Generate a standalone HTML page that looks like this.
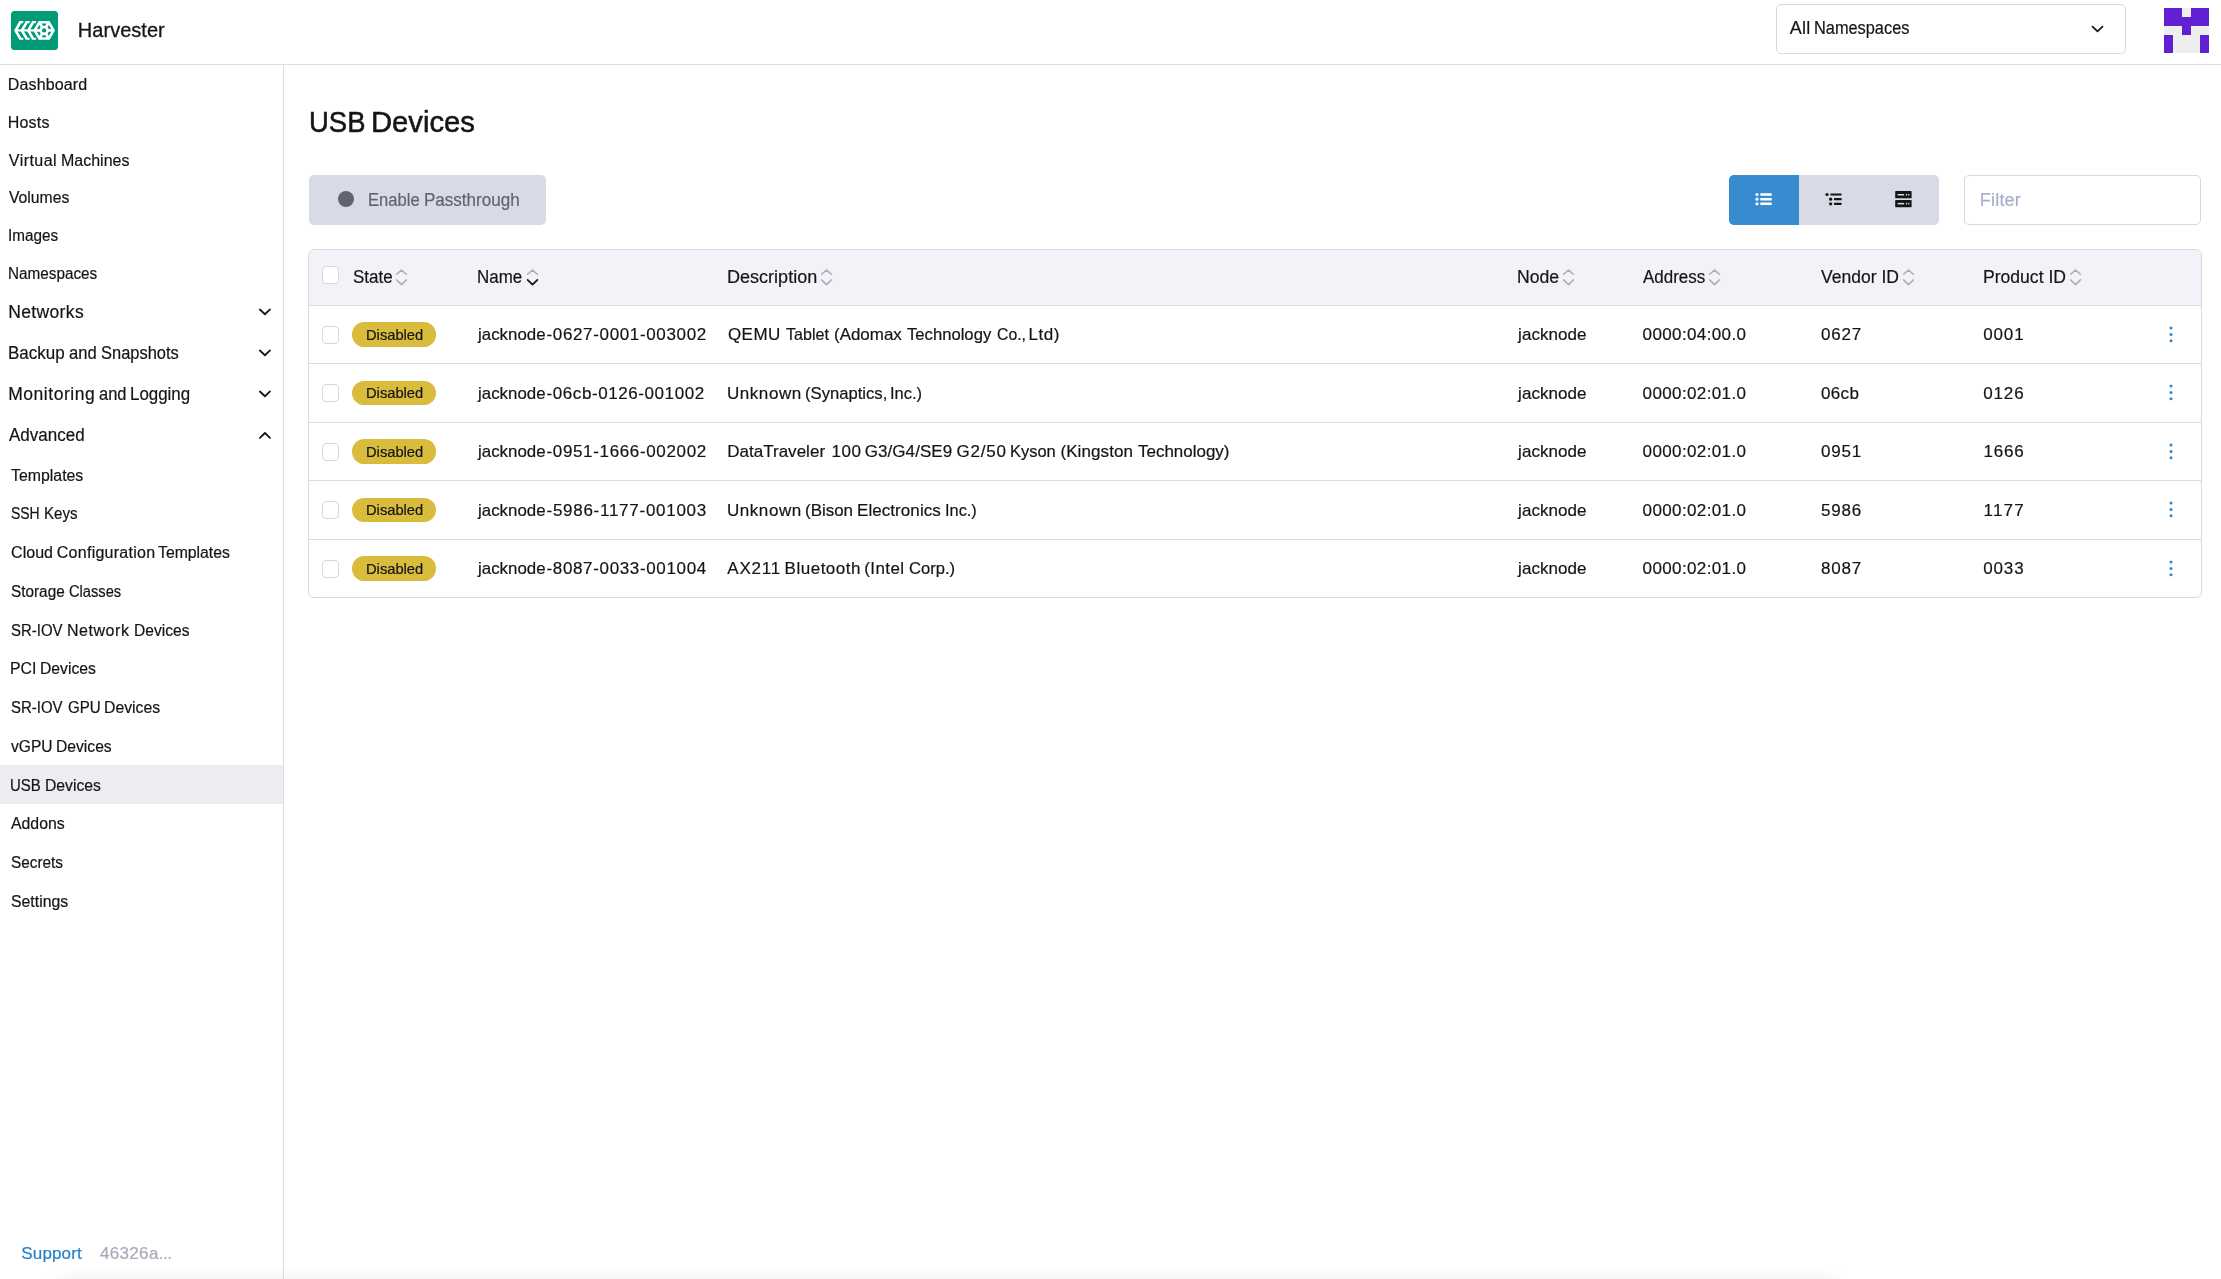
<!DOCTYPE html>
<html lang="en">
<head>
<meta charset="utf-8">
<title>Harvester - USB Devices</title>
<style>
*{box-sizing:border-box;margin:0;padding:0}
html,body{width:2221px;height:1279px;overflow:hidden;background:#fff}
body{position:relative;font-family:"Liberation Sans",sans-serif;color:#141419}
.a{position:absolute}
.t{position:absolute;white-space:nowrap;line-height:1;display:block;transform-origin:0 0;-webkit-text-stroke:0.2px currentColor}
.hdr-line{left:0;top:64px;width:2221px;height:1px;background:#dcdee7}
.side-line{left:283px;top:65px;width:1px;height:1214px;background:#dcdee7}
.active{left:0;top:765px;width:283px;height:38.7px;background:#ecedf3}
.logo{left:11px;top:11px;width:47px;height:39px}
.ns{left:1776px;top:4px;width:350px;height:50px;border:1px solid #d6d9e4;border-radius:5px;background:#fff}
.btn{left:309px;top:175px;width:237px;height:50px;border-radius:5px;background:#d8dae5}
.dot{left:338px;top:191.2px;width:16px;height:16px;border-radius:50%;background:#636370}
.views{left:1729px;top:175px;width:210px;height:50px;border-radius:5px;background:#d8dae5;overflow:hidden}
.views .on{position:absolute;left:0;top:0;width:70px;height:50px;background:#378bce}
.filter{left:1964px;top:175px;width:237px;height:50px;border:1px solid #d6d9e4;border-radius:5px;background:#fff}
.table{left:308px;top:249px;width:1894px;height:349px;border:1px solid #d6d9e4;border-radius:6px;background:#fff;overflow:hidden}
.thead{position:absolute;left:0;top:0;width:100%;height:56px;background:#f2f3f8}
.rl{position:absolute;left:0;width:100%;height:1px;background:#d9dce6}
.cb{position:absolute;width:16.9px;height:18px;border:1px solid #d5d8e3;border-radius:4px;background:#fff}
.badge{position:absolute;left:352px;width:84px;height:24.6px;border-radius:12.3px;background:#d9bc3c}
.fade{left:60px;top:1282px;width:1775px;height:30px;box-shadow:0 0 20px 0 rgba(0,0,0,0.1)}
svg{position:absolute;overflow:visible}
</style>
</head>
<body>
<div class="a hdr-line"></div>
<div class="a side-line"></div>
<div class="a active"></div>

<!-- logo -->
<svg class="logo" viewBox="11 11 47 39" width="47" height="39">
  <rect x="11" y="11" width="47" height="39" rx="3.5" fill="#009b77"/>
  <g fill="#fff"><polygon points="14.07,30.43 19.46,21.10 23.46,21.10 23.06,23.15 21.28,23.15 17.07,30.43 21.28,37.71 23.06,37.71 23.46,39.76 19.46,39.76"/><polygon points="20.42,30.43 25.81,21.10 29.81,21.10 29.41,23.15 27.63,23.15 23.42,30.43 27.63,37.71 29.41,37.71 29.81,39.76 25.81,39.76"/><polygon points="26.77,30.43 32.16,21.10 36.16,21.10 35.76,23.15 33.98,23.15 29.77,30.43 33.98,37.71 35.76,37.71 36.16,39.76 32.16,39.76"/><rect x="15" y="29.38" width="29" height="2.1"/><polygon points="55.00,30.43 49.55,39.87 38.65,39.87 33.20,30.43 38.65,20.99 49.55,20.99"/></g><polygon points="52.10,30.43 48.10,37.36 40.10,37.36 36.10,30.43 40.10,23.50 48.10,23.50" fill="#009b77"/><g stroke="#fff" stroke-width="2.7"><line x1="44.10" y1="30.43" x2="54.00" y2="30.43"/><line x1="44.10" y1="30.43" x2="49.05" y2="39.00"/><line x1="44.10" y1="30.43" x2="39.15" y2="39.00"/><line x1="44.10" y1="30.43" x2="34.20" y2="30.43"/><line x1="44.10" y1="30.43" x2="39.15" y2="21.86"/><line x1="44.10" y1="30.43" x2="49.05" y2="21.86"/></g><circle cx="44.1" cy="30.43" r="4.7" fill="#fff"/><circle cx="44.1" cy="30.43" r="2.15" fill="#009b77"/>
</svg>

<!-- namespace select -->
<div class="a ns"></div>
<svg style="left:2091px;top:25px" width="13" height="9" viewBox="0 0 13 9"><path d="M1.5 1.65 L6.5 6.35 L11.5 1.65" fill="none" stroke="#141419" stroke-width="1.75" stroke-linecap="round" stroke-linejoin="round"/></svg>

<!-- avatar -->
<svg style="left:2164px;top:8px" width="45" height="45" viewBox="0 0 5 5" shape-rendering="crispEdges">
  <rect width="5" height="5" fill="#eeeeee"/>
  <g fill="#6120d2">
    <rect x="0" y="0" width="2" height="2"/><rect x="3" y="0" width="2" height="2"/>
    <rect x="2" y="1" width="1" height="2"/>
    <rect x="0" y="3" width="1" height="2"/><rect x="4" y="3" width="1" height="2"/>
  </g>
</svg>

<!-- sidebar chevrons -->
<svg style="left:259px;top:308px" width="12" height="8" viewBox="0 0 12 8"><path d="M0.9 1.5 L5.95 6.25 L11 1.45" fill="none" stroke="#141419" stroke-width="1.75" stroke-linecap="round" stroke-linejoin="round"/></svg>
<svg style="left:259px;top:349px" width="12" height="8" viewBox="0 0 12 8"><path d="M0.9 1.5 L5.95 6.25 L11 1.45" fill="none" stroke="#141419" stroke-width="1.75" stroke-linecap="round" stroke-linejoin="round"/></svg>
<svg style="left:259px;top:390px" width="12" height="8" viewBox="0 0 12 8"><path d="M0.9 1.5 L5.95 6.25 L11 1.45" fill="none" stroke="#141419" stroke-width="1.75" stroke-linecap="round" stroke-linejoin="round"/></svg>
<svg style="left:259px;top:431px" width="12" height="8" viewBox="0 0 12 8"><path d="M0.9 6.85 L5.95 2.0 L11.05 6.8" fill="none" stroke="#141419" stroke-width="1.75" stroke-linecap="round" stroke-linejoin="round"/></svg>

<!-- action button -->
<div class="a btn"></div>
<div class="a dot"></div>

<!-- view toggles -->
<div class="a views"><div class="on"></div></div>
<svg style="left:1729px;top:175px" width="210" height="50" viewBox="1729 175 210 50">
  <g fill="#fff">
    <circle cx="1757" cy="194.5" r="1.6"/><circle cx="1757" cy="199.2" r="1.6"/><circle cx="1757" cy="203.8" r="1.6"/>
    <rect x="1760.3" y="193.2" width="11.5" height="2.6" rx="0.6"/><rect x="1760.3" y="197.9" width="11.5" height="2.6" rx="0.6"/><rect x="1760.3" y="202.5" width="11.5" height="2.6" rx="0.6"/>
  </g>
  <g fill="#141419">
    <circle cx="1827" cy="194.5" r="1.6"/><circle cx="1830.6" cy="199.2" r="1.6"/><circle cx="1830.6" cy="203.8" r="1.6"/>
    <rect x="1830.3" y="193.4" width="11.4" height="2.2" rx="0.8"/><rect x="1833.9" y="198.1" width="7.8" height="2.2" rx="0.8"/><rect x="1833.9" y="202.7" width="7.8" height="2.2" rx="0.8"/>
    <rect x="1895.2" y="191.1" width="16.4" height="7.2" rx="0.6"/><rect x="1895.2" y="200" width="16.4" height="7.2" rx="0.6"/>
  </g>
  <g fill="#d8dae5">
    <rect x="1897.6" y="194" width="6.5" height="1.5"/><rect x="1897.6" y="202.9" width="6.5" height="1.5"/>
    <rect x="1905.8" y="194" width="1.3" height="1.5"/><rect x="1908.1" y="194" width="1.3" height="1.5"/>
    <rect x="1905.8" y="202.9" width="1.3" height="1.5"/><rect x="1908.1" y="202.9" width="1.3" height="1.5"/>
  </g>
</svg>

<!-- filter -->
<div class="a filter"></div>

<!-- table -->
<div class="a table">
  <div class="thead"></div>
</div>
<div class="a rl" style="left:309px;top:305px;width:1892px"></div>
<div class="a rl" style="left:309px;top:363px;width:1892px"></div>
<div class="a rl" style="left:309px;top:422px;width:1892px"></div>
<div class="a rl" style="left:309px;top:480px;width:1892px"></div>
<div class="a rl" style="left:309px;top:539px;width:1892px"></div>
<div class="cb" style="left:322.05px;top:266px"></div>
<div class="cb" style="left:322.05px;top:325.95px"></div>
<div class="badge" style="top:322.15px"></div>
<svg style="left:2166px;top:324.85px" width="10" height="20" viewBox="0 0 10 20"><g fill="#3085cb"><circle cx="5" cy="3" r="1.5"/><circle cx="5" cy="9.4" r="1.5"/><circle cx="5" cy="15.8" r="1.5"/></g></svg>
<div class="cb" style="left:322.05px;top:384.45px"></div>
<div class="badge" style="top:380.65px"></div>
<svg style="left:2166px;top:383.35px" width="10" height="20" viewBox="0 0 10 20"><g fill="#3085cb"><circle cx="5" cy="3" r="1.5"/><circle cx="5" cy="9.4" r="1.5"/><circle cx="5" cy="15.8" r="1.5"/></g></svg>
<div class="cb" style="left:322.05px;top:442.95px"></div>
<div class="badge" style="top:439.15px"></div>
<svg style="left:2166px;top:441.85px" width="10" height="20" viewBox="0 0 10 20"><g fill="#3085cb"><circle cx="5" cy="3" r="1.5"/><circle cx="5" cy="9.4" r="1.5"/><circle cx="5" cy="15.8" r="1.5"/></g></svg>
<div class="cb" style="left:322.05px;top:501.45px"></div>
<div class="badge" style="top:497.65px"></div>
<svg style="left:2166px;top:500.35px" width="10" height="20" viewBox="0 0 10 20"><g fill="#3085cb"><circle cx="5" cy="3" r="1.5"/><circle cx="5" cy="9.4" r="1.5"/><circle cx="5" cy="15.8" r="1.5"/></g></svg>
<div class="cb" style="left:322.05px;top:559.90px"></div>
<div class="badge" style="top:556.10px"></div>
<svg style="left:2166px;top:558.80px" width="10" height="20" viewBox="0 0 10 20"><g fill="#3085cb"><circle cx="5" cy="3" r="1.5"/><circle cx="5" cy="9.4" r="1.5"/><circle cx="5" cy="15.8" r="1.5"/></g></svg>
<svg style="left:396.3px;top:269px" width="11" height="17" viewBox="0 0 11 17"><path d="M0.6 5.3 L5.5 1.1 L10.4 5.3" fill="none" stroke="#acadb6" stroke-width="1.5" stroke-linecap="round" stroke-linejoin="round"/><path d="M0.6 10.9 L5.5 15.6 L10.4 10.9" fill="none" stroke="#acadb6" stroke-width="1.5" stroke-linecap="round" stroke-linejoin="round"/></svg>
<svg style="left:526.6px;top:269px" width="11" height="17" viewBox="0 0 11 17"><path d="M0.6 5.3 L5.5 1.1 L10.4 5.3" fill="none" stroke="#acadb6" stroke-width="1.5" stroke-linecap="round" stroke-linejoin="round"/><path d="M0.6 10.9 L5.5 15.6 L10.4 10.9" fill="none" stroke="#141419" stroke-width="1.8" stroke-linecap="round" stroke-linejoin="round"/></svg>
<svg style="left:820.9px;top:269px" width="11" height="17" viewBox="0 0 11 17"><path d="M0.6 5.3 L5.5 1.1 L10.4 5.3" fill="none" stroke="#acadb6" stroke-width="1.5" stroke-linecap="round" stroke-linejoin="round"/><path d="M0.6 10.9 L5.5 15.6 L10.4 10.9" fill="none" stroke="#acadb6" stroke-width="1.5" stroke-linecap="round" stroke-linejoin="round"/></svg>
<svg style="left:1562.7px;top:269px" width="11" height="17" viewBox="0 0 11 17"><path d="M0.6 5.3 L5.5 1.1 L10.4 5.3" fill="none" stroke="#acadb6" stroke-width="1.5" stroke-linecap="round" stroke-linejoin="round"/><path d="M0.6 10.9 L5.5 15.6 L10.4 10.9" fill="none" stroke="#acadb6" stroke-width="1.5" stroke-linecap="round" stroke-linejoin="round"/></svg>
<svg style="left:1708.6px;top:269px" width="11" height="17" viewBox="0 0 11 17"><path d="M0.6 5.3 L5.5 1.1 L10.4 5.3" fill="none" stroke="#acadb6" stroke-width="1.5" stroke-linecap="round" stroke-linejoin="round"/><path d="M0.6 10.9 L5.5 15.6 L10.4 10.9" fill="none" stroke="#acadb6" stroke-width="1.5" stroke-linecap="round" stroke-linejoin="round"/></svg>
<svg style="left:1902.8px;top:269px" width="11" height="17" viewBox="0 0 11 17"><path d="M0.6 5.3 L5.5 1.1 L10.4 5.3" fill="none" stroke="#acadb6" stroke-width="1.5" stroke-linecap="round" stroke-linejoin="round"/><path d="M0.6 10.9 L5.5 15.6 L10.4 10.9" fill="none" stroke="#acadb6" stroke-width="1.5" stroke-linecap="round" stroke-linejoin="round"/></svg>
<svg style="left:2069.9px;top:269px" width="11" height="17" viewBox="0 0 11 17"><path d="M0.6 5.3 L5.5 1.1 L10.4 5.3" fill="none" stroke="#acadb6" stroke-width="1.5" stroke-linecap="round" stroke-linejoin="round"/><path d="M0.6 10.9 L5.5 15.6 L10.4 10.9" fill="none" stroke="#acadb6" stroke-width="1.5" stroke-linecap="round" stroke-linejoin="round"/></svg>

<div class="a fade"></div>

<div class="a" style="left:0;top:0;width:2221px;height:1279px;will-change:transform">
<span class="t" style="left:77.80px;top:20px;font-size:20px;letter-spacing:0.034px;-webkit-text-stroke-width:0.3px">Harvester</span>
<span class="t" style="left:1789.80px;top:19px;font-size:18px;letter-spacing:0.198px">All</span>
<span class="t" style="left:1814.09px;top:19px;font-size:18px;transform:scaleX(0.9082)">Namespaces</span>
<span class="t" style="left:7.80px;top:77px;font-size:16px;letter-spacing:0.128px">Dashboard</span>
<span class="t" style="left:7.80px;top:115px;font-size:16px;letter-spacing:0.175px">Hosts</span>
<span class="t" style="left:8.80px;top:153px;font-size:16px;letter-spacing:0.465px">Virtual</span>
<span class="t" style="left:60.50px;top:153px;font-size:16px;transform:scaleX(0.9989)">Machines</span>
<span class="t" style="left:8.80px;top:190px;font-size:16px;transform:scaleX(0.9826)">Volumes</span>
<span class="t" style="left:8.25px;top:228px;font-size:16px;transform:scaleX(0.9540)">Images</span>
<span class="t" style="left:8.25px;top:266px;font-size:16px;transform:scaleX(0.9548)">Namespaces</span>
<span class="t" style="left:8.20px;top:304px;font-size:17.5px;letter-spacing:0.360px">Networks</span>
<span class="t" style="left:8.23px;top:345px;font-size:17.5px;transform:scaleX(0.9711)">Backup</span>
<span class="t" style="left:69.30px;top:345px;font-size:17.5px;transform:scaleX(0.9485)">and</span>
<span class="t" style="left:100.80px;top:345px;font-size:17.5px;transform:scaleX(0.9404)">Snapshots</span>
<span class="t" style="left:8.20px;top:386px;font-size:17.5px;letter-spacing:0.536px">Monitoring</span>
<span class="t" style="left:99.00px;top:386px;font-size:17.5px;transform:scaleX(0.9415)">and</span>
<span class="t" style="left:129.93px;top:386px;font-size:17.5px;transform:scaleX(0.9661)">Logging</span>
<span class="t" style="left:9.00px;top:427px;font-size:17.5px;transform:scaleX(0.9714)">Advanced</span>
<span class="t" style="left:10.90px;top:468px;font-size:16px;transform:scaleX(0.9915)">Templates</span>
<span class="t" style="left:10.90px;top:506px;font-size:16px;transform:scaleX(0.8719)">SSH</span>
<span class="t" style="left:43.65px;top:506px;font-size:16px;transform:scaleX(0.9459)">Keys</span>
<span class="t" style="left:11.10px;top:545px;font-size:16px;letter-spacing:0.023px">Cloud</span>
<span class="t" style="left:56.80px;top:545px;font-size:16px;letter-spacing:0.261px">Configuration</span>
<span class="t" style="left:158.30px;top:545px;font-size:16px;transform:scaleX(0.9860)">Templates</span>
<span class="t" style="left:11.10px;top:584px;font-size:16px;transform:scaleX(0.9583)">Storage</span>
<span class="t" style="left:69.40px;top:584px;font-size:16px;transform:scaleX(0.9173)">Classes</span>
<span class="t" style="left:11.10px;top:623px;font-size:16px;transform:scaleX(0.9343)">SR-IOV</span>
<span class="t" style="left:67.00px;top:623px;font-size:16px;letter-spacing:0.537px">Network</span>
<span class="t" style="left:133.63px;top:623px;font-size:16px;transform:scaleX(0.9748)">Devices</span>
<span class="t" style="left:10.41px;top:661px;font-size:16px;transform:scaleX(0.9906)">PCI</span>
<span class="t" style="left:39.62px;top:661px;font-size:16px;transform:scaleX(0.9820)">Devices</span>
<span class="t" style="left:11.10px;top:700px;font-size:16px;transform:scaleX(0.9343)">SR-IOV</span>
<span class="t" style="left:67.60px;top:700px;font-size:16px;transform:scaleX(0.9438)">GPU</span>
<span class="t" style="left:103.81px;top:700px;font-size:16px;transform:scaleX(0.9856)">Devices</span>
<span class="t" style="left:11.10px;top:739px;font-size:16px;transform:scaleX(0.9735)">vGPU</span>
<span class="t" style="left:55.82px;top:739px;font-size:16px;transform:scaleX(0.9784)">Devices</span>
<span class="t" style="left:10.46px;top:778px;font-size:16px;transform:scaleX(0.9351)">USB</span>
<span class="t" style="left:44.62px;top:778px;font-size:16px;transform:scaleX(0.9820)">Devices</span>
<span class="t" style="left:11.00px;top:816px;font-size:16px;transform:scaleX(0.9896)">Addons</span>
<span class="t" style="left:11.00px;top:855px;font-size:16px;transform:scaleX(0.9587)">Secrets</span>
<span class="t" style="left:11.00px;top:894px;font-size:16px;transform:scaleX(0.9894)">Settings</span>
<span class="t" style="left:21.30px;top:1245px;font-size:17px;letter-spacing:0.147px;color:#2580c9">Support</span>
<span class="t" style="left:100.00px;top:1245px;font-size:17px;letter-spacing:0.325px;color:#a8a9bb">46326a</span>
<span class="t" style="left:159.49px;top:1245px;font-size:17px;transform:scaleX(0.9119);color:#a8a9bb">...</span>
<span class="t" style="left:308.57px;top:107px;font-size:30px;transform:scaleX(0.9152);-webkit-text-stroke-width:0.55px">USB</span>
<span class="t" style="left:371.25px;top:107px;font-size:30px;transform:scaleX(0.9740);-webkit-text-stroke-width:0.55px">Devices</span>
<span class="t" style="left:368.28px;top:191px;font-size:18px;transform:scaleX(0.9212);color:#62636f">Enable</span>
<span class="t" style="left:424.05px;top:191px;font-size:18px;transform:scaleX(0.9459);color:#62636f">Passthrough</span>
<span class="t" style="left:1979.80px;top:191px;font-size:18px;letter-spacing:0.199px;color:#aaaeca">Filter</span>
<span class="t" style="left:352.60px;top:268px;font-size:18px;transform:scaleX(0.9424)">State</span>
<span class="t" style="left:476.96px;top:268px;font-size:18px;transform:scaleX(0.9403)">Name</span>
<span class="t" style="left:726.90px;top:268px;font-size:18px;letter-spacing:0.038px">Description</span>
<span class="t" style="left:1516.62px;top:268px;font-size:18px;transform:scaleX(0.9781)">Node</span>
<span class="t" style="left:1642.60px;top:268px;font-size:18px;transform:scaleX(0.9420)">Address</span>
<span class="t" style="left:1820.70px;top:268px;font-size:18px;transform:scaleX(0.9731)">Vendor ID</span>
<span class="t" style="left:1983.02px;top:268px;font-size:18px;transform:scaleX(0.9758)">Product ID</span>
<span class="t" style="left:365.52px;top:327px;font-size:15px;transform:scaleX(0.9803)">Disabled</span>
<span class="t" style="left:477.79px;top:326px;font-size:17px;transform:scaleX(0.9928)">jacknode</span>
<span class="t" style="left:546.50px;top:326px;font-size:17px;letter-spacing:0.650px">-0627-0001-003002</span>
<span class="t" style="left:727.90px;top:326px;font-size:17px;letter-spacing:0.492px">QEMU</span>
<span class="t" style="left:785.90px;top:326px;font-size:17px;transform:scaleX(0.9443)">Tablet</span>
<span class="t" style="left:833.70px;top:326px;font-size:17px;transform:scaleX(0.9967)">(Adomax</span>
<span class="t" style="left:906.70px;top:326px;font-size:17px;transform:scaleX(0.9791)">Technology</span>
<span class="t" style="left:996.60px;top:326px;font-size:17px;transform:scaleX(0.9293)">Co.,</span>
<span class="t" style="left:1028.60px;top:326px;font-size:17px;letter-spacing:0.523px">Ltd)</span>
<span class="t" style="left:1518.10px;top:326px;font-size:17px;letter-spacing:0.058px">jacknode</span>
<span class="t" style="left:1642.60px;top:326px;font-size:17px;letter-spacing:0.372px">0000:04:00.0</span>
<span class="t" style="left:1821.10px;top:326px;font-size:17px;letter-spacing:0.745px">0627</span>
<span class="t" style="left:1983.20px;top:326px;font-size:17px;letter-spacing:0.879px">0001</span>
<span class="t" style="left:365.52px;top:385px;font-size:15px;transform:scaleX(0.9803)">Disabled</span>
<span class="t" style="left:477.79px;top:385px;font-size:17px;transform:scaleX(0.9928)">jacknode</span>
<span class="t" style="left:546.50px;top:385px;font-size:17px;letter-spacing:0.579px">-06cb-0126-001002</span>
<span class="t" style="left:726.90px;top:385px;font-size:17px;letter-spacing:0.580px">Unknown</span>
<span class="t" style="left:804.72px;top:385px;font-size:17px;transform:scaleX(0.9786)">(Synaptics,</span>
<span class="t" style="left:890.43px;top:385px;font-size:17px;transform:scaleX(0.9681)">Inc.)</span>
<span class="t" style="left:1518.10px;top:385px;font-size:17px;letter-spacing:0.058px">jacknode</span>
<span class="t" style="left:1642.60px;top:385px;font-size:17px;letter-spacing:0.372px">0000:02:01.0</span>
<span class="t" style="left:1821.10px;top:385px;font-size:17px;letter-spacing:0.297px">06cb</span>
<span class="t" style="left:1983.20px;top:385px;font-size:17px;letter-spacing:0.879px">0126</span>
<span class="t" style="left:365.52px;top:444px;font-size:15px;transform:scaleX(0.9803)">Disabled</span>
<span class="t" style="left:477.79px;top:443px;font-size:17px;transform:scaleX(0.9928)">jacknode</span>
<span class="t" style="left:546.50px;top:443px;font-size:17px;letter-spacing:0.650px">-0951-1666-002002</span>
<span class="t" style="left:727.20px;top:443px;font-size:17px;letter-spacing:0.021px">DataTraveler</span>
<span class="t" style="left:831.40px;top:443px;font-size:17px;letter-spacing:0.595px">100</span>
<span class="t" style="left:864.70px;top:443px;font-size:17px;letter-spacing:0.078px">G3/G4/SE9</span>
<span class="t" style="left:956.50px;top:443px;font-size:17px;letter-spacing:0.811px">G2/50</span>
<span class="t" style="left:1010.03px;top:443px;font-size:17px;transform:scaleX(0.9674)">Kyson</span>
<span class="t" style="left:1060.40px;top:443px;font-size:17px;letter-spacing:0.092px">(Kingston</span>
<span class="t" style="left:1138.40px;top:443px;font-size:17px;transform:scaleX(0.9978)">Technology)</span>
<span class="t" style="left:1518.10px;top:443px;font-size:17px;letter-spacing:0.058px">jacknode</span>
<span class="t" style="left:1642.60px;top:443px;font-size:17px;letter-spacing:0.372px">0000:02:01.0</span>
<span class="t" style="left:1821.10px;top:443px;font-size:17px;letter-spacing:0.745px">0951</span>
<span class="t" style="left:1983.50px;top:443px;font-size:17px;letter-spacing:0.779px">1666</span>
<span class="t" style="left:365.52px;top:502px;font-size:15px;transform:scaleX(0.9803)">Disabled</span>
<span class="t" style="left:477.79px;top:502px;font-size:17px;transform:scaleX(0.9928)">jacknode</span>
<span class="t" style="left:546.50px;top:502px;font-size:17px;letter-spacing:0.729px">-5986-1177-001003</span>
<span class="t" style="left:726.90px;top:502px;font-size:17px;letter-spacing:0.580px">Unknown</span>
<span class="t" style="left:804.70px;top:502px;font-size:17px;transform:scaleX(0.9972)">(Bison</span>
<span class="t" style="left:857.00px;top:502px;font-size:17px;letter-spacing:0.066px">Electronics</span>
<span class="t" style="left:945.14px;top:502px;font-size:17px;transform:scaleX(0.9618)">Inc.)</span>
<span class="t" style="left:1518.10px;top:502px;font-size:17px;letter-spacing:0.058px">jacknode</span>
<span class="t" style="left:1642.60px;top:502px;font-size:17px;letter-spacing:0.372px">0000:02:01.0</span>
<span class="t" style="left:1821.10px;top:502px;font-size:17px;letter-spacing:0.745px">5986</span>
<span class="t" style="left:1983.50px;top:502px;font-size:17px;letter-spacing:1.199px">1177</span>
<span class="t" style="left:365.52px;top:561px;font-size:15px;transform:scaleX(0.9803)">Disabled</span>
<span class="t" style="left:477.79px;top:560px;font-size:17px;transform:scaleX(0.9928)">jacknode</span>
<span class="t" style="left:546.50px;top:560px;font-size:17px;letter-spacing:0.650px">-8087-0033-001004</span>
<span class="t" style="left:727.30px;top:560px;font-size:17px;letter-spacing:0.794px">AX211</span>
<span class="t" style="left:784.60px;top:560px;font-size:17px;letter-spacing:0.502px">Bluetooth</span>
<span class="t" style="left:864.30px;top:560px;font-size:17px;letter-spacing:0.397px">(Intel</span>
<span class="t" style="left:909.00px;top:560px;font-size:17px;transform:scaleX(0.9749)">Corp.)</span>
<span class="t" style="left:1518.10px;top:560px;font-size:17px;letter-spacing:0.058px">jacknode</span>
<span class="t" style="left:1642.60px;top:560px;font-size:17px;letter-spacing:0.372px">0000:02:01.0</span>
<span class="t" style="left:1821.10px;top:560px;font-size:17px;letter-spacing:0.745px">8087</span>
<span class="t" style="left:1983.20px;top:560px;font-size:17px;letter-spacing:0.879px">0033</span>
</div>
</body>
</html>
